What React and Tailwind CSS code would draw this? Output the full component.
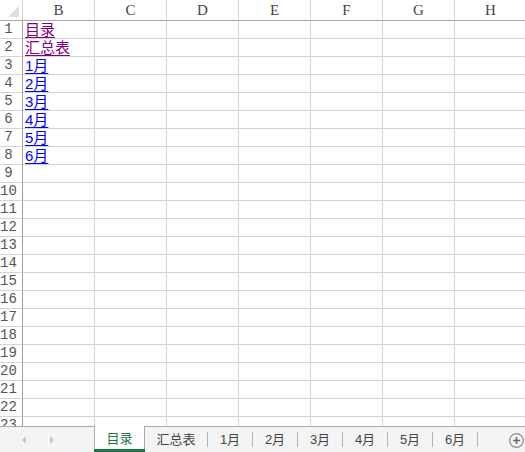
import React from 'react';

const COLS = ['B', 'C', 'D', 'E', 'F', 'G', 'H'];
const LINKS = [
  { text: '目录', visited: true },
  { text: '汇总表', visited: true },
  { text: '1月' },
  { text: '2月' },
  { text: '3月' },
  { text: '4月' },
  { text: '5月' },
  { text: '6月' },
];
const MONTHS = ['1月', '2月', '3月', '4月', '5月', '6月'];

const mono = { fontFamily: '"Liberation Mono", "DejaVu Sans Mono", monospace' };
const serif = { fontFamily: '"Liberation Serif", "DejaVu Serif", serif' };
const cjk = { fontFamily: '"Liberation Sans", "Noto Sans CJK SC", sans-serif' };

function Row({ n }) {
  const link = LINKS[n - 1];
  return (
    <div className="flex h-[18px] shrink-0">
      <div
        className="w-[23px] shrink-0 border-r border-r-[#9f9f9f] border-b border-b-[#d4d4d4] text-[14px] leading-[17px] text-[#555] pr-[5px] text-center"
        style={mono}
      >
        {n}
      </div>
      {COLS.map((c, i) => (
        <div key={c} className="w-[72px] shrink-0 border-r border-b border-[#d4d4d4] relative">
          {i === 0 && link && (
            <span
              className={`absolute left-[2px] top-0 whitespace-nowrap text-[15px] leading-[17px] underline underline-offset-[2px] ${link.visited ? 'text-[#800080]' : 'text-[#0000ff]'}`}
              style={cjk}
            >
              {link.text}
            </span>
          )}
        </div>
      ))}
    </div>
  );
}

export default function App() {
  const rows = Array.from({ length: 23 }, (_, i) => i + 1);
  return (
    <div className="w-[525px] h-[452px] overflow-hidden bg-white flex flex-col">
      {/* GRID */}
      <div className="h-[426px] overflow-hidden flex flex-col shrink-0">
        <div className="flex h-[21px] shrink-0 border-b border-[#a6a6a6]">
          <div className="w-[23px] shrink-0 border-r border-[#d4d4d4] relative">
            <div className="absolute right-[3px] bottom-[3px] w-0 h-0 border-l-[11px] border-l-transparent border-b-[11px] border-b-[#dfdfdf]"></div>
          </div>
          {COLS.map(c => (
            <div
              key={c}
              className="w-[72px] shrink-0 border-r border-[#d4d4d4] text-center text-[15px] leading-[20px] text-[#444]"
              style={serif}
            >
              {c}
            </div>
          ))}
        </div>
        {rows.map(n => <Row key={n} n={n} />)}
      </div>

      {/* SHEET TABS */}
      <div className="h-[26px] shrink-0 bg-[#f4f4f4] border-t border-[#ababab] flex items-stretch relative">
        <div className="w-[94px] shrink-0 flex items-center">
          <span className="ml-[22px] w-0 h-0 border-y-[4px] border-y-transparent border-r-[4px] border-r-[#c6c6c6]"></span>
          <span className="ml-[24px] w-0 h-0 border-y-[4px] border-y-transparent border-l-[4px] border-l-[#c6c6c6]"></span>
        </div>
        <div className="w-[51px] shrink-0 -mt-px bg-white border-x border-[#ababab] relative flex items-center justify-center text-[13px] text-[#217346]" style={cjk}>
          目录
          <div className="absolute left-[-1px] right-[-1px] bottom-0 h-[3px] bg-[#217346]"></div>
        </div>
        <div className="w-[62px] shrink-0 flex items-center justify-center text-[13px] text-[#444]" style={cjk}>汇总表</div>
        {MONTHS.map(m => (
          <React.Fragment key={m}>
            <div className="w-px my-[5px] shrink-0 bg-[#b3b3b3]"></div>
            <div className="w-[44px] shrink-0 flex items-center justify-center text-[13px] text-[#444]" style={cjk}>{m}</div>
          </React.Fragment>
        ))}
        <div className="w-px my-[5px] shrink-0 bg-[#b3b3b3]"></div>
        <div className="absolute right-[1px] top-[6px]">
          <svg width="15" height="15" viewBox="0 0 15 15">
            <circle cx="7.5" cy="7.5" r="6.8" fill="none" stroke="#8a8a8a" strokeWidth="1.2" />
            <path d="M7.5 4v7M4 7.5h7" stroke="#6a6a6a" strokeWidth="1.6" />
          </svg>
        </div>
      </div>
    </div>
  );
}
